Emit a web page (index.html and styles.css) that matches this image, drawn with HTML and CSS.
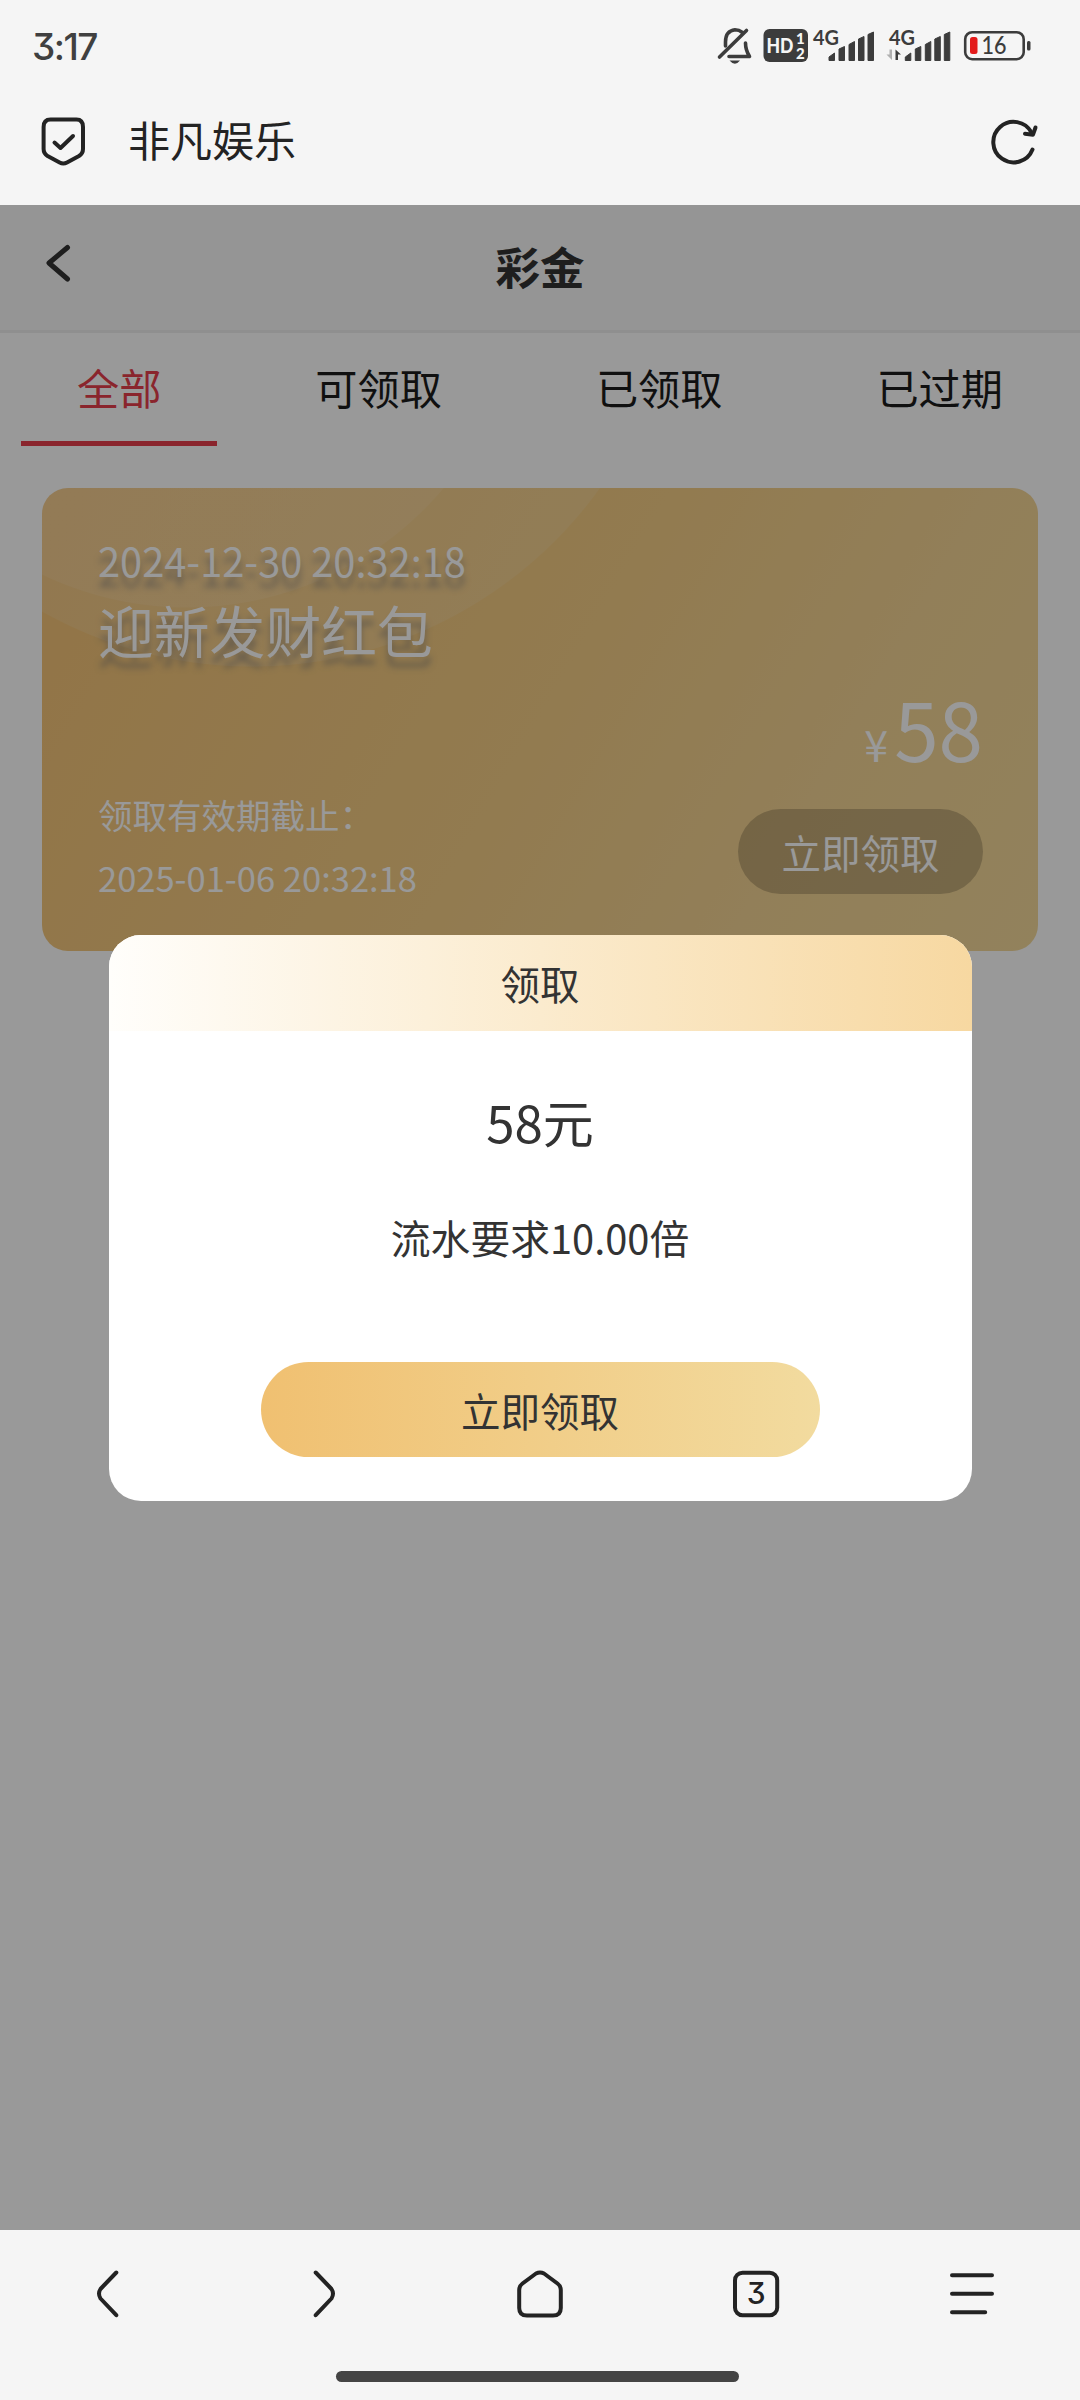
FILE: index.html
```html
<!DOCTYPE html>
<html lang="zh-CN">
<head>
<meta charset="utf-8">
<title>彩金</title>
<link rel="stylesheet" href="styles.css">
</head>
<body>
<div class="status">
  <span class="clock">3:17</span>
  <svg class="status-icons" width="320" height="50" viewBox="716 20 320 50">
    <g fill="none" stroke="#3c3c3c" stroke-width="3.6" stroke-linejoin="round" stroke-linecap="round">
      <path d="M742.5 32.500Q739 29.800 735 29.800Q725.500 31 725.500 42V46"/>
      <path d="M745.500 43Q745.500 50 749.500 56.500H729"/>
      <path d="M719.500 57L746.500 30.500"/>
    </g>
    <path d="M729.500 60.500H740Q735 67 729.500 60.500Z" fill="#3c3c3c"/>
    <rect x="763.500" y="29" width="44.500" height="33" rx="6" fill="#3c3c3c"/>
    <text class="hd" x="766.500" y="52.500" textLength="27" lengthAdjust="spacingAndGlyphs">HD</text>
    <text class="sub" x="796" y="44">1</text>
    <text class="sub" x="796" y="58.500">2</text>
    <g fill="#3c3c3c">
      <text class="net" x="813" y="45" textLength="26" lengthAdjust="spacingAndGlyphs">4G</text>
      <path id="bars" d="M829 60.500V57L834.500 53V60.500ZM839 60.500V49L844.500 46.500V60.500ZM849 60.500V44.500L854.500 41.500V60.500ZM858.500 60.500V39L864 36.500V60.500ZM868 60.500V34.500L873.500 32V60.500Z" stroke="#3c3c3c" stroke-width="1" stroke-linejoin="round"/>
      <text class="net" x="889" y="45" textLength="26" lengthAdjust="spacingAndGlyphs">4G</text>
      <use href="#bars" x="76.300"/>
      <path d="M895.500 49.500L901 54.500H898V60H895.500Z"/>
      <path d="M892 49.500V60L886.500 54.500H889.500V49.500Z" fill="#b0b0b0"/>
    </g>
    <rect x="965.200" y="32.200" width="58.500" height="27" rx="7" fill="none" stroke="#3c3c3c" stroke-width="2.600"/>
    <rect x="1027" y="41" width="3.500" height="9.500" rx="1.500" fill="#3c3c3c"/>
    <rect x="970" y="37" width="7.500" height="17" rx="2.500" fill="#e31b1b"/>
    <text class="pct" x="981.500" y="54" textLength="25" lengthAdjust="spacingAndGlyphs">16</text>
  </svg>
</div>

<div class="address">
  <svg class="line shield" width="48" height="52" viewBox="40 116 48 52">
    <path d="M50.500 120.500H76.500Q83 120.500 83 128V150Q83 154.500 79 157L67 163.500Q63.300 165.500 59.600 163.500L47.600 157Q43.600 154.500 43.600 150V128Q43.600 120.500 50.500 120.500Z"/>
    <path d="M54.500 143.500L60.500 149L73 137"/>
  </svg>
  <span class="site">非凡娱乐</span>
  <svg class="line refresh" width="50" height="50" viewBox="990 116 50 50">
    <path d="M1032.500 149.500A20.300 20.300 0 1 1 1031.500 132.500"/>
    <path d="M1025 133.700L1033 134.700L1035.500 127.500"/>
  </svg>
</div>

<main class="page">
  <header class="topbar">
    <svg class="back" width="30" height="40" viewBox="44 243 30 40"><path d="M67.500 247.500L49 263L67.500 279"/></svg>
    <h1>彩金</h1>
  </header>
  <nav class="tabs">
    <span class="tab active">全部</span>
    <span class="tab">可领取</span>
    <span class="tab">已领取</span>
    <span class="tab">已过期</span>
  </nav>
  <section class="card">
    <div class="card-head">
      <div class="date">2024-12-30 20:32:18</div>
      <div class="name">迎新发财红包</div>
    </div>
    <div class="card-foot">
      <div class="expiry">领取有效期截止：<br>2025-01-06 20:32:18</div>
      <div class="claim">
        <div class="amount"><small>¥</small>58</div>
        <button class="claim-btn">立即领取</button>
      </div>
    </div>
  </section>
  <div class="overlay">
    <div class="modal">
      <div class="modal-title">领取</div>
      <div class="modal-body">
        <div class="sum">58元</div>
        <div class="rule">流水要求10.00倍</div>
        <button class="confirm">立即领取</button>
      </div>
    </div>
  </div>
</main>

<footer class="toolbar">
  <div class="tools">
    <svg class="line" width="50" height="50" viewBox="83 2269 50 50"><path d="M116.300 2272.500L100.500 2289Q97.500 2293.500 100.500 2298.500L116.300 2315.200"/></svg>
    <svg class="line" width="50" height="50" viewBox="299 2269 50 50"><path d="M315.700 2272.500L331.500 2289Q334.500 2293.500 331.500 2298.500L315.700 2315.200"/></svg>
    <svg class="line" width="50" height="50" viewBox="515 2269 50 50"><path d="M536 2273.500Q540 2271.300 544 2273.500L557.500 2283.500Q560.800 2286 560.800 2290V2308Q560.800 2315.500 553 2315.500H527Q519.200 2315.500 519.200 2308V2290Q519.200 2286 522.500 2283.500Z"/></svg>
    <svg class="line" width="50" height="50" viewBox="731 2269 50 50"><rect x="735" y="2272.700" width="42.200" height="42.500" rx="7.500"/><text class="count" x="756.200" y="2303.700" text-anchor="middle">3</text></svg>
    <svg class="line" width="50" height="50" viewBox="947 2269 50 50"><path d="M952 2275.200H992M952 2293.700H992M952 2312.300H985.200"/></svg>
  </div>
  <div class="pill"></div>
</footer>
</body>
</html>
```
FILE: styles.css
```css
* { box-sizing: border-box; }

body {
  margin: 0;
  width: 1080px;
  height: 2400px;
  display: flex;
  flex-direction: column;
  overflow: hidden;
  background: #f5f5f5;
  color: #333;
  font-family: "Noto Sans CJK SC", sans-serif;
}

svg { display: block; }
button { border: 0; padding: 0; font-family: inherit; }

.status {
  height: 90px;
  padding: 0 44px 0 32px;
  display: flex;
  align-items: center;
  justify-content: space-between;
}
.clock {
  font: 500 37px/40px Inter, sans-serif;
  font-feature-settings: "cv09";
  letter-spacing: -1.5px;
  color: #404040;
  padding-top: 3px;
}
.hd, .sub, .net { font-family: Lato, sans-serif; font-weight: 900; }
.hd { font-size: 21px; fill: #f5f5f5; }
.sub { font-size: 15px; fill: #f5f5f5; }
.net { font-size: 20.500px; font-weight: 700; }
.pct { font: 500 24px Lato, sans-serif; fill: #3c3c3c; }

.address {
  height: 115px;
  padding: 0 40px 13px;
  display: flex;
  align-items: center;
}
.line {
  fill: none;
  stroke: #232323;
  stroke-width: 4;
  stroke-linecap: round;
  stroke-linejoin: round;
}
.site {
  margin: 0 0 4px 40px;
  font-size: 42px;
  line-height: 60px;
  color: #232323;
}
.refresh { margin-left: auto; }

.page {
  position: relative;
  height: 2025px;
  background: #fff;
}
.topbar {
  height: 128px;
  border-bottom: 3px solid #eee;
  background: #f8f8f8;
  display: grid;
  grid-template-columns: 1fr auto 1fr;
  align-items: center;
}
.back {
  margin: 0 0 9px 44px;
  fill: none;
  stroke: #333;
  stroke-width: 5;
  stroke-linecap: round;
  stroke-linejoin: round;
}
h1 { margin: 0 0 3px; font-size: 44.500px; font-weight: 700; line-height: 64px; }

.tabs {
  height: 113px;
  display: flex;
  justify-content: space-around;
}
.tab {
  padding: 23px 56px 0;
  border-bottom: 5px solid transparent;
  font-size: 42.200px;
  line-height: 62px;
  color: #1c1c1c;
}
.tab.active { color: #e63f4c; border-color: #e63f4c; }

.card {
  height: 463px;
  margin: 42px 42px 0;
  padding: 43px 55px 0 56px;
  border-radius: 26px;
  color: #fff;
  background:
    radial-gradient(circle 336px at 145px -216px, rgba(255,255,255,.09) 335px, transparent 336px),
    radial-gradient(circle 429px at 210px -250px, rgba(255,255,255,.1) 428px, transparent 429px),
    linear-gradient(120deg, #f3c276 0%, #f3cd85 50%, #f4d494 75%, #f4d99a 100%);
}
.card-head { height: 210px; text-shadow: 0 10px 6px rgba(100,105,120,.5); }
.date { font-size: 39.800px; line-height: 58px; }
.name { font-size: 55.800px; line-height: 79px; }
.card-foot { display: flex; justify-content: space-between; }
.expiry { padding-top: 42px; font-size: 34.500px; line-height: 63px; }
.claim { display: flex; flex-direction: column; align-items: flex-end; margin-top: -72px; }
.amount { font-size: 80px; line-height: 116px; margin-bottom: 8px; }
.amount small { font-size: 43px; margin-right: 6px; }
.claim-btn {
  width: 245px;
  height: 85px;
  border-radius: 43px;
  background: rgba(0,0,0,.2);
  color: #fff;
  font-size: 39.500px;
}

.overlay {
  position: absolute;
  inset: 0;
  background: rgba(0,0,0,.4);
  display: flex;
  align-items: center;
  justify-content: center;
}
.modal {
  width: 863px;
  height: 566px;
  border-radius: 32px;
  overflow: hidden;
  background: #fff;
}
.modal-title {
  height: 96px;
  font-size: 39.500px;
  line-height: 96px;
  text-align: center;
  background: linear-gradient(90deg, #fffefb, #f7d8a1);
}
.modal-body { display: flex; flex-direction: column; align-items: center; }
.sum { margin-top: 52px; font-size: 51px; line-height: 76px; }
.rule { margin-top: 48px; font-size: 39.800px; line-height: 60px; }
.confirm {
  margin-top: 95px;
  width: 559px;
  height: 95px;
  border-radius: 48px;
  background: linear-gradient(90deg, #f0c071, #f2db9f);
  color: #333;
  font-size: 39.500px;
}

.toolbar { height: 170px; padding-top: 39px; }
.tools { display: grid; grid-template-columns: repeat(5, 1fr); justify-items: center; }
.count { font: 500 30px Inter, sans-serif; font-feature-settings: "cv09"; fill: #232323; stroke: none; }
.pill { width: 403px; height: 11px; margin: 52px 0 0 336px; border-radius: 6px; background: #444; }
```
